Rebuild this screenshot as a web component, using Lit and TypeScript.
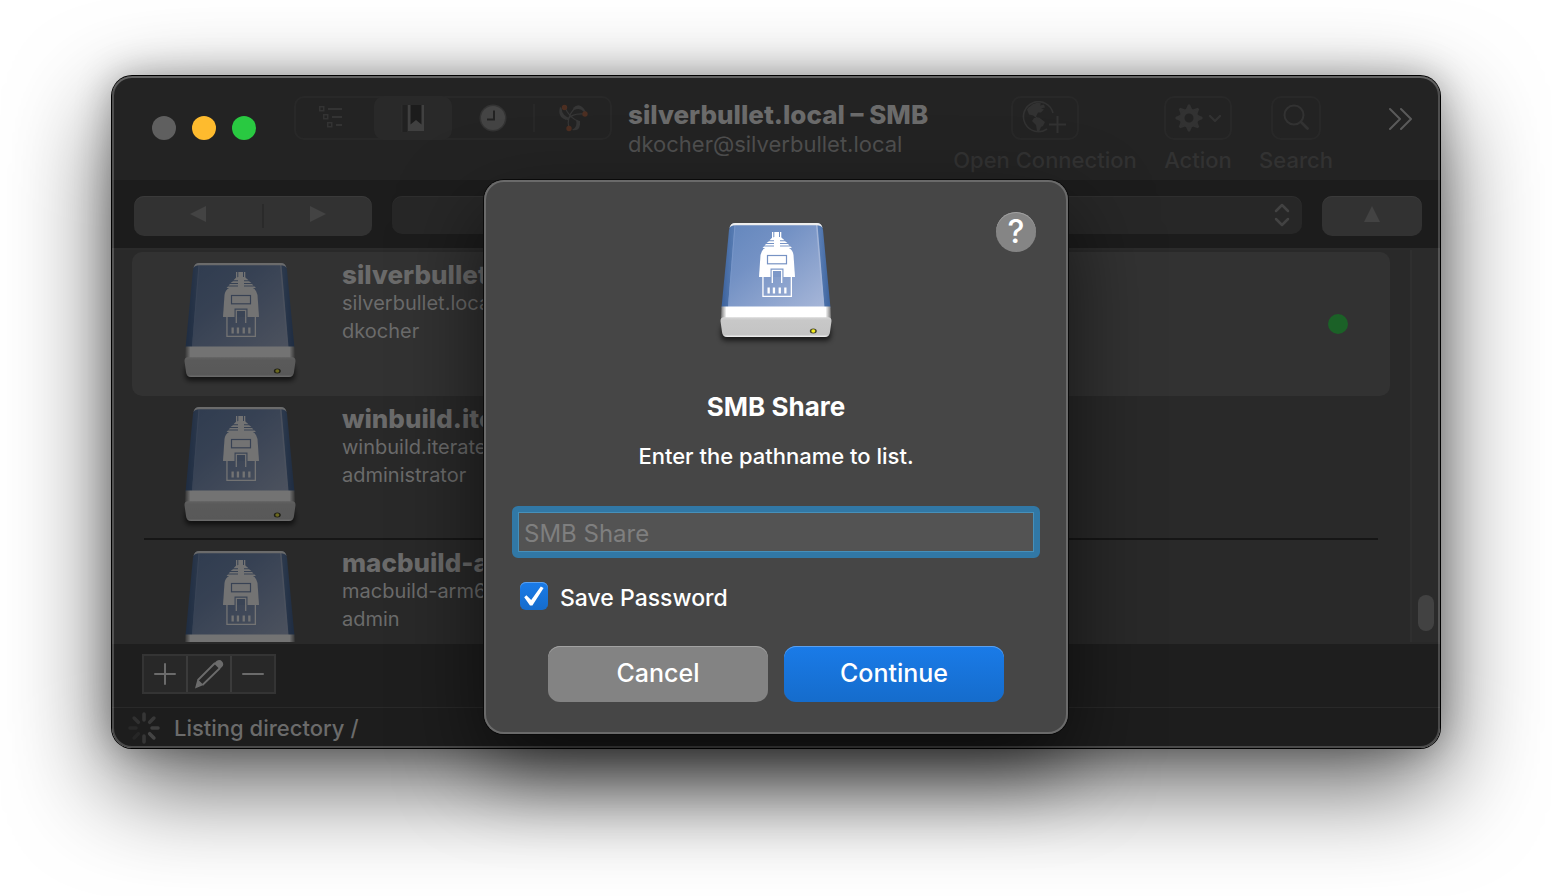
import { LitElement, html, css, svg } from "lit";
import { customElement, property, state } from "lit/decorators.js";
import { classMap } from "lit/directives/class-map.js";

interface Bookmark {
  name: string;
  host: string;
  user: string;
  connected?: boolean;
}

const bookmarks: Bookmark[] = [
  { name: "silverbullet.local – SMB", host: "silverbullet.local", user: "dkocher", connected: true },
  { name: "winbuild.iterate.ch – SMB", host: "winbuild.iterate.ch", user: "administrator" },
  { name: "macbuild-arm64 – SMB", host: "macbuild-arm64.local", user: "admin" },
];

@customElement("drive-icon")
export class DriveIcon extends LitElement {
  static styles = css`
    :host { display: block; width: 128px; height: 128px; }
    svg { display: block; overflow: visible; }
    :host([dimmed]) svg { filter: brightness(0.45) saturate(0.8); }
  `;

  @property({ type: Boolean, reflect: true }) dimmed = false;

  render() {
    return html`<svg width="128" height="128" viewBox="0 0 128 128" aria-hidden="true">
      <defs>
        <linearGradient id="face" x1="0" y1="0" x2="1" y2="1">
          <stop offset="0" stop-color="#6487bd" />
          <stop offset=".35" stop-color="#7391c4" />
          <stop offset="1" stop-color="#a6b6d8" />
        </linearGradient>
        <linearGradient id="edge" x1="0" y1="0" x2="1" y2="0">
          <stop offset="0" stop-color="#3c629c" />
          <stop offset=".1" stop-color="#5479b0" />
          <stop offset=".9" stop-color="#587db4" />
          <stop offset="1" stop-color="#3c629c" />
        </linearGradient>
        <linearGradient id="band" x1="0" x2="1" y1="0" y2="0">
          <stop offset="0" stop-color="#777" />
          <stop offset=".05" stop-color="#fff" />
          <stop offset=".95" stop-color="#fff" />
          <stop offset="1" stop-color="#777" />
        </linearGradient>
        <linearGradient id="base" x1="0" x2="0" y1="0" y2="1">
          <stop offset="0" stop-color="#d6d6d6" />
          <stop offset=".15" stop-color="#c8c8c8" />
          <stop offset=".88" stop-color="#c4c4c4" />
          <stop offset="1" stop-color="#f4f4f4" />
        </linearGradient>
        <filter id="soft" x="-20%" y="-50%" width="140%" height="200%">
          <feGaussianBlur stdDeviation="2.500" />
        </filter>
      </defs>
      <rect x="9" y="105" width="110" height="16" rx="5" fill="#000" opacity=".6" filter="url(#soft)" />
      <path d="M17 10Q18 3 23 3H105Q110 3 111 10L118.500 88H9.500Z" fill="url(#edge)" />
      <path d="M22.500 5H105L112 87H16Z" fill="url(#face)" />
      <path d="M104 5H105.500L112.500 87H111Z" fill="#a3b5d8" />
      <path d="M22.500 5H23.500L17 87H16Z" fill="#7896c8" />
      <path d="M17.500 8Q18.500 3 23 3H105Q109.500 3 110.500 8Q109 5.300 105 5.300H23Q19 5.300 17.500 8Z" fill="#eee" />
      <path d="M9.500 86.500H118.500L119 100H9Z" fill="url(#band)" />
      <path d="M8.500 101Q8.500 97.300 12 97.300H116Q119.500 97.300 119.500 101L118 112Q117.500 117 113 117H15Q10.500 117 10 112Z" fill="url(#base)" />
      <g fill="#fff">
        <path d="M60 12H61.300V18H60ZM62.300 12H67V20H62.300ZM68 12H69.300V18H68Z" />
        <path d="M60.500 17.300H69L72.500 20.300H57.500ZM57 21.300H73L75.500 23H54.500ZM54 24H76L77.500 25.600H52.500ZM52 26.600H78.500L80 28H50.500Z" />
        <path d="M62 17H68V30H62Z" />
        <path d="M53.500 27.800H76.500Q81 30 81.500 35L83 57H47L48.500 35Q49 30 53.500 27.800Z" />
        <path d="M50.300 56H51.600V75.700H78.700V56H80V77H50.300Z" />
        <path d="M55.500 67.500h2.300v6h-2.300zM60.800 67.500h2.300v6h-2.300zM66.600 67.500h2.300v6h-2.300zM72.200 67.500h2.300v6h-2.300z" />
      </g>
      <rect x="55.500" y="35.500" width="19" height="8.300" fill="none" stroke="#7793c4" stroke-width="1.200" />
      <path d="M58.500 57V48.500H71.500V57Z" fill="#7d98c8" />
      <path d="M60.300 63V50.300H69.700V63" fill="none" stroke="#fff" stroke-width="1.300" />
      <ellipse cx="101.300" cy="111" rx="3.500" ry="2.500" fill="#45452c" />
      <ellipse cx="101.300" cy="111" rx="2" ry="1.700" fill="#f4ec1c" />
    </svg>`;
  }
}

const outlineIcon = svg`<g fill="none" stroke="currentColor">
  <path stroke-width="1.500" d="M2.750 2.750h4v4h-4zM6.750 10.750h4v4h-4zM10.750 18.750h4v4h-4z"/>
  <path stroke-width="2" d="M11 5h14M15 13h10M19 21h6"/></g>`;

const bookIcon = svg`<path d="M2 1h6v27H2z" fill="#1e1e1e" opacity=".7"/>
  <path d="M2 1h1.500v27H2z" fill="#2c2c2c"/>
  <path d="M9 1h16v26H9z" fill="#404040"/>
  <path d="M11.500 1h11v19.500L17 16l-5.500 4.500z" fill="#1c1c1c"/>`;

const clockIcon = svg`<circle cx="14" cy="14" r="13.500" fill="#333"/><circle cx="14" cy="14" r="12" fill="#444"/>
  <path d="M15 6.500v9H8" fill="none" stroke="#222" stroke-width="2"/>`;

const bonjourIcon = svg`<g fill="#363636">
  <path d="M2 3Q-1 13 8 16L12 14Q4 12 3.500 4z"/>
  <path d="M15 4Q22-3 28 8L26 8Q22 3 16 6z"/>
  <path d="M14 26Q23 28 22 17L18 16Q20 23 14 26z"/></g>
  <g fill="none" stroke="#363636" stroke-width="1.200">
  <path d="M7 4Q12 14 20 17M26 10Q14 9 9 16M11 24Q8 14 16 5"/></g>
  <g fill="#4c2e21"><circle cx="6.500" cy="3.500" r="2.700"/><circle cx="27" cy="10" r="2.700"/><circle cx="11" cy="24.500" r="2.700"/></g>`;

const globeIcon = svg`<path d="M31 12A15 15 0 1 0 25 28" fill="none" stroke="currentColor" stroke-width="1.600"/>
  <path fill="currentColor" d="M6 7l5-4 5-1.500 3 1-1 2 4-1 1 3-4 1 3 1-3 3h-3l-2 4 3 2-2 0-4-3-4-1-2-5zM12 17l5-.5 6 4.500-2 4-2 1-2 5-2-1-1-6-4-4z"/>
  <path d="M27 23.500h17M35.500 15v17" stroke="currentColor" stroke-width="2"/>`;

const gearTeeth = [0, 45, 90, 135, 180, 225, 270, 315];
const gearIcon = svg`${gearTeeth.map(
  (angle) => svg`<path d="M10.500 6L13 .5h2L17.500 6z" fill="currentColor" transform=${`rotate(${angle} 14 14)`}/>`
)}<circle cx="14" cy="14" r="7" fill="none" stroke="currentColor" stroke-width="5"/>
  <path d="M35 12l5 5 5-5" fill="none" stroke="currentColor" stroke-width="2.400" stroke-linecap="round" stroke-linejoin="round"/>`;

const searchIcon = svg`<g fill="none" stroke="currentColor" stroke-linecap="round">
  <circle cx="11" cy="11" r="9.500" stroke-width="2"/><path d="M18 18l6.500 6.500" stroke-width="2.800"/></g>`;

const spokes = [
  [0, "#363636"], [45, "#383838"], [90, "#3e3e3e"], [135, "#444"],
  [180, "#363636"], [225, "#262626"], [270, "#282828"], [315, "#303030"],
] as const;

@customElement("share-dialog")
export class ShareDialog extends LitElement {
  static styles = css`
    :host { display: block; width: 584px; max-width: 100%; }
    * { box-sizing: border-box; }
    .sheet {
      position: relative;
      padding: 32px 28px;
      border-radius: 20px;
      background: #464646;
      color: #fff;
      box-shadow: inset 0 0 0 2px #6a6a6a, 0 0 0 1px #0a0a0a, 0 36px 84px rgba(0, 0, 0, 0.6);
    }
    .top {
      display: grid;
      grid-template-columns: 40px 1fr 40px;
      justify-items: center;
      padding: 0 4px;
    }
    .art { grid-column: 2; margin-top: 8px; }
    .help {
      width: 40px; height: 40px; padding: 0; border: 0; border-radius: 50%;
      background: #858585; color: #fff;
      font: 500 32px/40px Inter, sans-serif;
      box-shadow: inset 0 1px 0 #a0a0a0;
    }
    h2 { margin: 43px 0 0; font-size: 26px; line-height: 32px; font-weight: 700; text-align: center; }
    p { margin: 19px 0 0; font-size: 22px; line-height: 28px; font-weight: 500; text-align: center; }
    .path {
      display: block; width: 100%; height: 52px; margin-top: 36px; padding: 2px 6px 0;
      border: 6px solid #3178a6; border-radius: 6px; background: #535353; color: #fff;
      font: 24px/36px Inter, sans-serif; outline: 0;
      box-shadow: inset 0 0 0 1px #4690ba;
    }
    .path::placeholder { color: #7f7f7f; opacity: 1; }
    .save { display: flex; align-items: center; gap: 12px; margin: 24px 0 0 8px; height: 28px; font-size: 23px; font-weight: 500; line-height: 32px; }
    .save label { padding-top: 3px; }
    .tick {
      appearance: none; display: grid; place-items: center; width: 28px; height: 28px; margin: 0;
      border-radius: 6px; background: #565656;
    }
    .tick:checked { background: linear-gradient(#1a7be8, #156ccc); box-shadow: inset 0 1px 0 #5aa0ef; }
    .tick:checked::before {
      content: ""; width: 20px; height: 20px; background: #fff;
      clip-path: polygon(1% 56%, 12% 46%, 36% 70%, 84% 2%, 98% 10%, 42% 98%, 30% 98%);
    }
    .actions { display: flex; justify-content: center; gap: 16px; margin-top: 36px; }
    .actions button {
      width: 220px; height: 56px; padding: 0 0 3px; border: 0; border-radius: 12px;
      background: #838383; color: #fff; font: 500 25px/32px Inter, sans-serif;
      box-shadow: inset 0 1px 0 #a2a2a2;
    }
    .actions .primary { background: linear-gradient(#1a7be8, #156ccc); box-shadow: inset 0 1px 0 #5aa0ef; }
  `;

  @state() private save = true;

  render() {
    return html`<section class="sheet" role="dialog" aria-labelledby="heading">
      <div class="top">
        <drive-icon class="art"></drive-icon>
        <button class="help" aria-label="Help">?</button>
      </div>
      <h2 id="heading">SMB Share</h2>
      <p>Enter the pathname to list.</p>
      <input class="path" type="text" placeholder="SMB Share" aria-label="SMB Share" />
      <div class="save">
        <input id="save" class="tick" type="checkbox" .checked=${this.save}
          @change=${(e: Event) => (this.save = (e.target as HTMLInputElement).checked)} />
        <label for="save">Save Password</label>
      </div>
      <div class="actions">
        <button>Cancel</button>
        <button class="primary">Continue</button>
      </div>
    </section>`;
  }
}

@customElement("app-root")
export class AppRoot extends LitElement {
  static styles = css`
    :host { display: block; font-family: Inter, sans-serif; background: #fff; }
    * { box-sizing: border-box; }
    button { font: inherit; color: inherit; padding: 0; border: 0; background: none; }
    svg { display: block; }
    .desktop { height: 100vh; min-height: 700px; padding: 76px 112px 148px; overflow: hidden; }
    .window {
      position: relative; height: 100%; border-radius: 20px;
      box-shadow: 0 0 0 1px #000, 0 36px 100px rgba(0, 0, 0, 0.65), 0 0 36px rgba(0, 0, 0, 0.3);
    }
    .frame {
      position: relative; display: flex; flex-direction: column; height: 100%;
      overflow: hidden; border-radius: 20px; background: #1d1d1d;
    }
    .frame::after {
      content: ""; position: absolute; inset: 0; border-radius: 20px; pointer-events: none;
      box-shadow: inset 0 0 0 2px rgba(255, 255, 255, 0.2), inset 0 2px 0 rgba(255, 255, 255, 0.12);
    }
    .sheet-layer { position: absolute; top: 104px; left: 0; right: 0; display: flex; justify-content: center; }

    .toolbar { display: flex; align-items: flex-start; height: 104px; padding: 20px 28px 0 40px; background: #232323; }
    .lights { display: flex; gap: 16px; margin: 20px 38px 0 0; }
    .light { width: 24px; height: 24px; border-radius: 50%; background: #5f5f5f; }
    .light.minimize { background: #febb2e; }
    .light.zoom { background: #29c941; }
    .segments { display: grid; grid-template-columns: 78px 78px 81px 77px; width: 318px; height: 44px; border: 2px solid #282828; border-radius: 10px; color: #333; }
    .segment { display: grid; place-items: center; margin: -2px 0; border-radius: 10px; }
    .segment.active { background: #292929; }
    .segment.ruled { border-left: 2px solid #282828; border-radius: 0; margin: 6px 0; }
    .titles { flex: 1; min-width: 0; padding-left: 16px; white-space: nowrap; }
    h1 { margin: 4px 0 0; font-size: 26px; line-height: 30px; font-weight: 800; color: #6b6b6b; }
    .account { margin: 0; font-size: 22px; line-height: 28px; color: #4f4f4f; }
    .tools { display: grid; grid-template-columns: 182px 68px 72px; gap: 28px; }
    .tool { display: flex; flex-direction: column; align-items: center; color: #323232; font-size: 22px; font-weight: 500; line-height: 28px; white-space: nowrap; }
    .box { display: grid; place-items: center; width: 68px; height: 44px; margin-bottom: 6px; border: 2px solid #282828; border-radius: 10px; }
    .box.small { width: 50px; }
    .overflow { margin: 11px 0 0 56px; color: #5a5a5a; }

    .nav { display: flex; gap: 20px; align-items: flex-start; height: 68px; padding: 16px 18px 0 22px; background: #1c1c1c; }
    .arrows { display: grid; grid-template-columns: 128px 110px; align-items: center; width: 238px; height: 40px; border-radius: 10px; background: #323232; box-shadow: inset 0 1px 0 #3a3a3a; color: #434343; }
    .arrows button { display: grid; place-items: center; height: 24px; }
    .arrows button + button { border-left: 2px solid #2a2a2a; }
    .arrows svg, .up svg { margin-bottom: 4px; }
    .combo { display: grid; flex: 1; align-items: center; height: 38px; border-radius: 10px; background: #272727; box-shadow: inset 0 1px 0 #2e2e2e; }
    .combo select { grid-area: 1 / 1; width: 100%; height: 38px; border: 0; background: none; appearance: none; }
    .combo svg { grid-area: 1 / 1; justify-self: end; margin-right: 12px; pointer-events: none; }
    .up { display: grid; place-items: center; width: 100px; height: 40px; border-radius: 10px; background: #323232; box-shadow: inset 0 1px 0 #3a3a3a; color: #434343; }

    .browser { display: flex; flex: 1; min-height: 0; border-top: 2px solid #2b2b2b; border-bottom: 2px solid #292929; background: #292929; }
    .list { flex: 1; min-width: 0; margin: 0; padding: 2px 20px 0; list-style: none; overflow: hidden; }
    .row { display: flex; height: 144px; padding: 8px 42px 0 44px; border-radius: 10px; color: #6b6b6b; }
    .row.selected { background: #323232; }
    .row.ruled { margin: 0 12px; padding: 8px 30px 0 32px; border-bottom: 2px solid #161616; border-radius: 0; }
    .info { flex: 1; padding-left: 38px; font-size: 20px; line-height: 28px; }
    .info strong { display: block; font-size: 26px; line-height: 29px; font-weight: 800; }
    .info span { display: block; }
    .status-dot { width: 20px; height: 20px; margin-top: 54px; border-radius: 50%; background: #1b6127; }
    .track { display: flex; align-items: flex-end; justify-content: center; width: 30px; padding-bottom: 11px; border-left: 2px solid #2f2f2f; background: #2b2b2b; }
    .thumb { width: 16px; height: 36px; border-radius: 8px; background: #424242; }

    .edit { height: 64px; padding: 10px 30px; border-bottom: 1px solid #292929; background: #1e1e1e; }
    .edit-group { display: flex; width: 134px; height: 40px; border: 2px solid #343434; background: #282828; color: #6b6b6b; }
    .edit-group button { display: grid; place-items: center; flex: 1; }
    .edit-group button + button { border-left: 2px solid #3b3b3b; }
    .footer { display: flex; align-items: center; gap: 14px; height: 40px; padding-left: 16px; font-size: 22px; font-weight: 500; line-height: 28px; color: #6b6b6b; }
  `;

  @state() private selected = 0;

  private row(item: Bookmark, index: number) {
    const classes = { row: true, selected: index === this.selected, ruled: index !== this.selected };
    return html`<li class=${classMap(classes)} @click=${() => (this.selected = index)}>
      <drive-icon dimmed></drive-icon>
      <div class="info"><strong>${item.name}</strong><span>${item.host}</span><span>${item.user}</span></div>
      ${item.connected ? html`<div class="status-dot" role="img" aria-label="Connected"></div>` : null}
    </li>`;
  }

  render() {
    return html`<main class="desktop"><div class="window">
      <div class="frame">
        <header class="toolbar">
          <div class="lights">
            <button class="light" aria-label="Close"></button>
            <button class="light minimize" aria-label="Minimize"></button>
            <button class="light zoom" aria-label="Zoom"></button>
          </div>
          <div class="segments">
            <button class="segment" aria-label="Browser"><svg width="36" height="28" viewBox="0 0 36 28">${outlineIcon}</svg></button>
            <button class="segment active" aria-label="Bookmarks"><svg width="28" height="28" viewBox="0 0 28 28">${bookIcon}</svg></button>
            <button class="segment" aria-label="History"><svg width="28" height="28" viewBox="0 0 28 28">${clockIcon}</svg></button>
            <button class="segment ruled" aria-label="Bonjour"><svg width="30" height="28" viewBox="0 0 30 28">${bonjourIcon}</svg></button>
          </div>
          <div class="titles">
            <h1>silverbullet.local – SMB</h1>
            <p class="account">dkocher@silverbullet.local</p>
          </div>
          <div class="tools">
            <button class="tool"><span class="box"><svg width="46" height="34" viewBox="0 0 46 34">${globeIcon}</svg></span>Open Connection</button>
            <button class="tool"><span class="box"><svg width="46" height="28" viewBox="0 0 46 28">${gearIcon}</svg></span>Action</button>
            <button class="tool"><span class="box small"><svg width="26" height="28" viewBox="0 0 26 28">${searchIcon}</svg></span>Search</button>
          </div>
          <button class="overflow" aria-label="More">
            <svg width="24" height="24" viewBox="0 0 24 24" fill="none" stroke="currentColor" stroke-width="2" stroke-linecap="round" stroke-linejoin="round"><path d="M2 2l10 10L2 22M13 2l10 10-10 10" /></svg>
          </button>
        </header>

        <nav class="nav">
          <div class="arrows">
            <button aria-label="Back"><svg width="16" height="16"><path d="M16 0v16L0 8z" fill="currentColor" /></svg></button>
            <button aria-label="Forward"><svg width="16" height="16"><path d="M0 0v16l16-8z" fill="currentColor" /></svg></button>
          </div>
          <div class="combo">
            <select aria-label="Path"></select>
            <svg width="16" height="24" viewBox="0 0 16 24" fill="none" stroke="#424242" stroke-width="2.500" stroke-linecap="round" stroke-linejoin="round"><path d="M2 8l6-6 6 6M2 16l6 6 6-6" /></svg>
          </div>
          <button class="up" aria-label="Up"><svg width="16" height="16"><path d="M0 16h16L8 0z" fill="currentColor" /></svg></button>
        </nav>

        <div class="browser">
          <ul class="list">${bookmarks.map((item, index) => this.row(item, index))}</ul>
          <div class="track"><div class="thumb"></div></div>
        </div>

        <div class="edit"><div class="edit-group">
          <button aria-label="Add"><svg width="22" height="22"><path d="M1 11h20M11 1v20" stroke="currentColor" stroke-width="2" stroke-linecap="round" /></svg></button>
          <button aria-label="Edit"><svg width="30" height="30" viewBox="0 0 30 30">
            <path d="M4 21L21 4M8.500 26L26 9" stroke="currentColor" stroke-width="1.800" />
            <path d="M3.500 20l6 6L1 29.500zM20 4.500L22.500 2Q26 0 28 2.500Q30.500 5 28 8L25.500 10z" fill="currentColor" />
          </svg></button>
          <button aria-label="Remove"><svg width="22" height="22"><path d="M1 11h20" stroke="currentColor" stroke-width="2" stroke-linecap="round" /></svg></button>
        </div></div>

        <footer class="footer">
          <svg width="32" height="32" viewBox="0 0 32 32" aria-hidden="true">${spokes.map(
            ([angle, color]) => svg`<path d="M16 2v6" stroke=${color} stroke-width="3.600" stroke-linecap="round" transform=${`rotate(${angle} 16 16)`}/>`
          )}</svg>
          <span>Listing directory /</span>
        </footer>
      </div>
      <div class="sheet-layer"><share-dialog></share-dialog></div>
    </div></main>`;
  }
}
